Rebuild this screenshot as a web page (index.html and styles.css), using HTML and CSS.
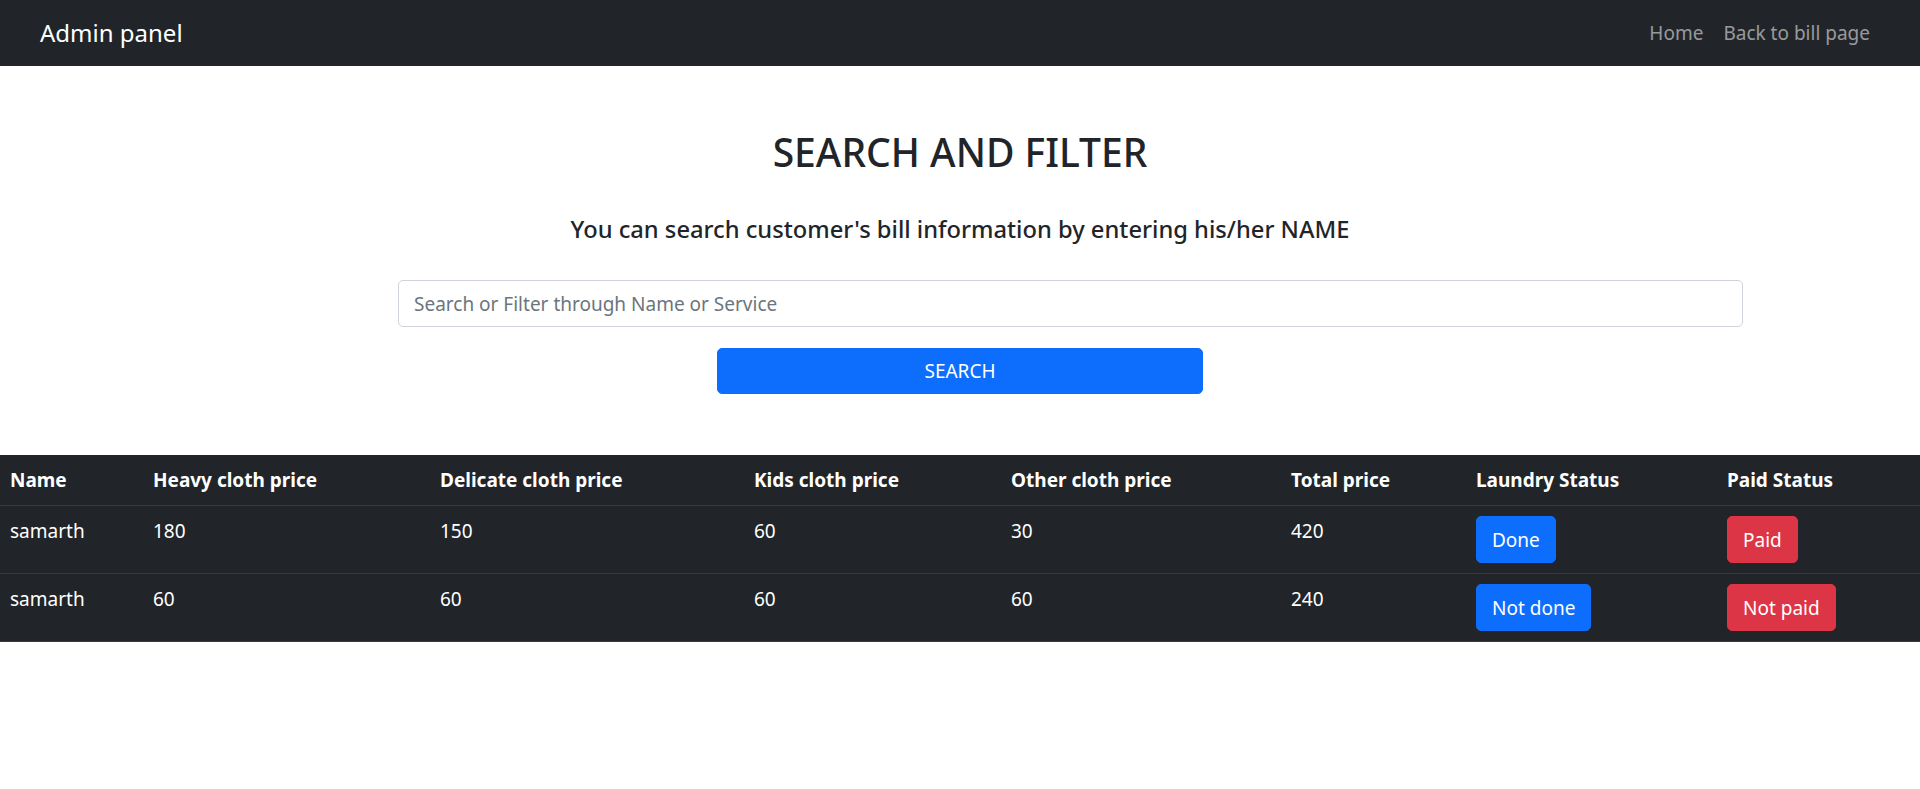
FILE: index.html
```html
<!DOCTYPE html>
<html lang="en">
<head>
<meta charset="utf-8">
<title>Admin panel</title>
<link rel="stylesheet" href="styles.css">
</head>
<body>
<nav class="navbar">
  <a class="brand" href="#">Admin panel</a>
  <ul class="nav">
    <li><a class="nav-link" href="#">Home</a></li>
    <li><a class="nav-link" href="#">Back to bill page</a></li>
  </ul>
</nav>
<main class="search">
  <h2 class="title">SEARCH AND FILTER</h2>
  <h5 class="subtitle">You can search customer's bill information by entering his/her NAME</h5>
  <form class="search-form">
    <input class="search-input" type="text" placeholder="Search or Filter through Name or Service">
    <button class="btn-search" type="button">SEARCH</button>
  </form>
</main>
<table class="bills">
  <thead>
    <tr>
      <th class="c-name">Name</th>
      <th class="c-heavy">Heavy cloth price</th>
      <th class="c-delicate">Delicate cloth price</th>
      <th class="c-kids">Kids cloth price</th>
      <th class="c-other">Other cloth price</th>
      <th class="c-total">Total price</th>
      <th class="c-laundry">Laundry Status</th>
      <th class="c-paid">Paid Status</th>
    </tr>
  </thead>
  <tbody>
    <tr>
      <td>samarth</td><td>180</td><td>150</td><td>60</td><td>30</td><td>420</td>
      <td><button class="btn btn-blue" type="button">Done</button></td>
      <td><button class="btn btn-red" type="button">Paid</button></td>
    </tr>
    <tr>
      <td>samarth</td><td>60</td><td>60</td><td>60</td><td>60</td><td>240</td>
      <td><button class="btn btn-blue" type="button">Not done</button></td>
      <td><button class="btn btn-red" type="button">Not paid</button></td>
    </tr>
  </tbody>
</table>
</body>
</html>
```
FILE: styles.css
```css
* { box-sizing: border-box; }
body {
  margin: 0;
  font-family: "Noto Sans", "Open Sans", sans-serif;
  font-size: 19px;
  line-height: 1.5;
  color: #212529;
  background: #fff;
}
.navbar {
  height: 66px;
  background: #212529;
  display: flex;
  align-items: center;
  justify-content: space-between;
  padding: 0 40px 0 40px;
}
.brand {
  color: #fff;
  font-size: 24px;
  text-decoration: none;
}
.nav {
  list-style: none;
  margin: 0;
  padding: 0;
  display: flex;
}
.nav-link {
  display: block;
  padding: 0 10px;
  color: rgba(255,255,255,.55);
  text-decoration: none;
  font-size: 19px;
}
.search {
  padding-top: 62px;
  text-align: center;
}
.title {
  margin: 0 0 38px;
  font-size: 39px;
  font-weight: 500;
  line-height: 48px;
}
.subtitle {
  margin: 0 0 36px;
  font-size: 23.7px;
  font-weight: 500;
  line-height: 30px;
}
.search-form {
  display: flex;
  flex-direction: column;
}
.search-input {
  margin-left: 398px;
  width: 1345px;
  height: 47px;
  padding: 7px 15px;
  font: inherit;
  font-size: 19px;
  color: #212529;
  border: 1px solid #ced4da;
  border-radius: 5px;
  outline: none;
}
.search-input::placeholder { color: #6c757d; }
.btn-search {
  align-self: center;
  margin-top: 21px;
  width: 486px;
  height: 46px;
  font: inherit;
  font-size: 19px;
  color: #fff;
  background: #0d6efd;
  border: 1px solid #0d6efd;
  border-radius: 5px;
}
.bills {
  margin-top: 61px;
  width: 100%;
  border-collapse: collapse;
  table-layout: fixed;
  background: #212529;
  color: #fff;
}
.bills th, .bills td {
  padding: 10px;
  text-align: left;
  vertical-align: top;
  line-height: 30px;
  border-bottom: 1px solid #373b3e;
}
.bills th { font-weight: 700; }
.c-name { width: 143px; }
.c-heavy { width: 287px; }
.c-delicate { width: 314px; }
.c-kids { width: 257px; }
.c-other { width: 280px; }
.c-total { width: 185px; }
.c-laundry { width: 251px; }
.c-paid { width: 203px; }
.btn {
  font: inherit;
  font-size: 19px;
  line-height: 30px;
  padding: 7.5px 15px;
  border-radius: 5px;
  color: #fff;
  border: 1px solid transparent;
}
.btn-blue { background: #0d6efd; border-color: #0d6efd; }
.btn-red { background: #dc3545; border-color: #dc3545; }
```
